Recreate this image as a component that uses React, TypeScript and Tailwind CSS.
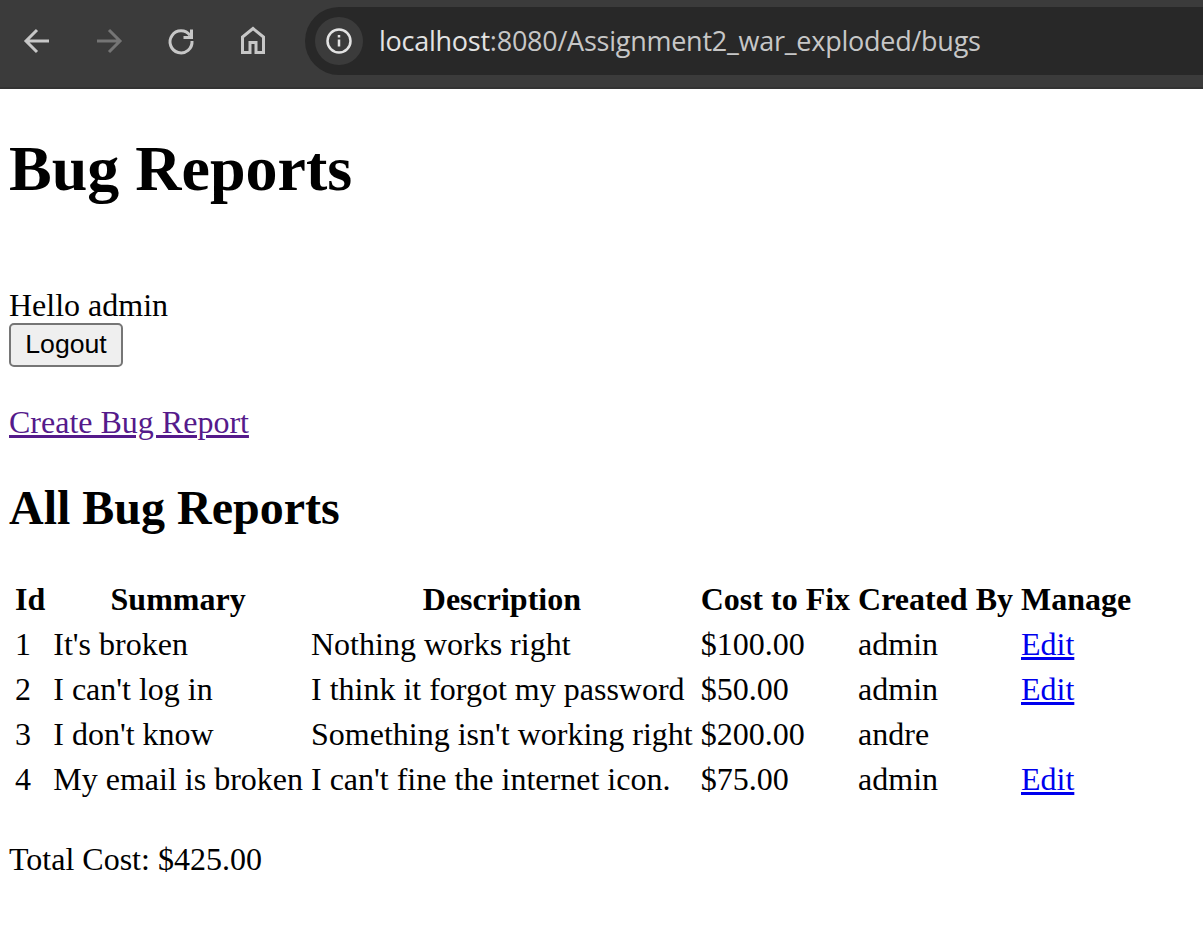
const rows = [
  { id: 1, summary: "It's broken", description: 'Nothing works right', cost: '$100.00', by: 'admin', edit: true },
  { id: 2, summary: "I can't log in", description: 'I think it forgot my password', cost: '$50.00', by: 'admin', edit: true },
  { id: 3, summary: "I don't know", description: "Something isn't working right", cost: '$200.00', by: 'andre', edit: false },
  { id: 4, summary: 'My email is broken', description: "I can't fine the internet icon.", cost: '$75.00', by: 'admin', edit: true },
]

const headers = ['Id', 'Summary', 'Description', 'Cost to Fix', 'Created By', 'Manage']

function Toolbar() {
  return (
    <div className="flex h-[89px] items-center border-b-2 border-[#333333] bg-[#3b3b3b] pb-[6px] pl-[19px]">
      <div className="flex w-[286px] items-center gap-[36px]">
        <svg width="36" height="36" viewBox="0 0 36 36" fill="none" stroke="#c7c7c7" strokeWidth="3" className="shrink-0">
          <path d="M30 18H8M18 7 7 18l11 11" />
        </svg>
        <svg width="36" height="36" viewBox="0 0 36 36" fill="none" stroke="#757575" strokeWidth="3" className="shrink-0">
          <path d="M6 18h22M18 7l11 11-11 11" />
        </svg>
        <svg width="36" height="36" viewBox="0 0 36 36" fill="none" stroke="#c7c7c7" strokeWidth="3" className="shrink-0">
          <path d="M27 12.5A11 11 0 1 0 29 18" />
          <path d="M28.5 6.5v8h-8" />
        </svg>
        <svg width="36" height="36" viewBox="0 0 36 36" fill="none" stroke="#c7c7c7" strokeWidth="3" className="shrink-0">
          <path d="M7.5 29.500V14L18 5.500 28.500 14v15.500h-7.500V19.500h-6v10z" />
        </svg>
      </div>
      <div className="flex h-[68px] flex-1 items-center rounded-l-[34px] bg-[#282828] pl-[10px]">
        <div className="flex h-[48px] w-[48px] items-center justify-center rounded-full bg-[#3b3b3b]">
          <svg width="28" height="28" viewBox="0 0 28 28" fill="none" stroke="#e3e3e3" strokeWidth="2.500">
            <circle cx="14" cy="14" r="11.500" />
            <path d="M14 12.500v7M14 8v2.500" />
          </svg>
        </div>
        <span className="ml-[16px] font-['Open_Sans',sans-serif] text-[27px] leading-[37px] tracking-[-0.25px] text-[#c7c7c7]">
          <span className="text-[#e3e3e3]">localhost</span>:8080/Assignment2_war_exploded/bugs
        </span>
      </div>
    </div>
  )
}

export default function App() {
  return (
    <div className="h-[926px] overflow-hidden bg-white font-['Liberation_Serif',serif] text-[32px] leading-[37px] text-black">
      <Toolbar />
      <div className="pl-[9px]">
        <h1 className="mt-[43px] text-[64px] leading-[74px] font-bold">Bug Reports</h1>
        <div className="mt-[81px]">Hello admin</div>
        <button className="-mt-[1px] block h-[44px] w-[114px] rounded-[5px] border-2 border-[#767676] bg-[#efefef] pb-[3px] font-['Liberation_Sans',sans-serif] text-[26.670px] leading-[30px]">
          Logout
        </button>
        <p className="mt-[37px]">
          <a href="#" className="text-[#551a8b] underline">Create Bug Report</a>
        </p>
        <h2 className="mt-[39px] text-[48px] leading-[55px] font-bold">All Bug Reports</h2>
        <table className="mt-[39.500px] border-separate border-spacing-[4px]">
          <thead>
            <tr>
              {headers.map((h) => (
                <th key={h} className="p-[2px] font-bold">{h}</th>
              ))}
            </tr>
          </thead>
          <tbody>
            {rows.map((r) => (
              <tr key={r.id}>
                <td className="p-[2px]">{r.id}</td>
                <td className="p-[2px]">{r.summary}</td>
                <td className="p-[2px]">{r.description}</td>
                <td className="p-[2px]">{r.cost}</td>
                <td className="p-[2px]">{r.by}</td>
                <td className="p-[2px]">
                  {r.edit && <a href="#" className="text-[#0000ee] underline">Edit</a>}
                </td>
              </tr>
            ))}
          </tbody>
        </table>
        <p className="mt-[37.500px]">Total Cost: $425.00</p>
      </div>
    </div>
  )
}
